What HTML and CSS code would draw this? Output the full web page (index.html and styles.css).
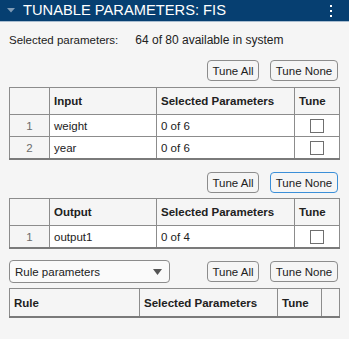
FILE: index.html
```html
<!DOCTYPE html>
<html>
<head>
<meta charset="utf-8">
<link rel="stylesheet" href="styles.css">
</head>
<body>
<div class="panel">
  <div class="header">
    <svg class="caret" width="8" height="5" viewBox="0 0 8 5"><polygon points="0,0 8,0 4,4.5" fill="#7f9bb5"/></svg>
    <span class="title">TUNABLE PARAMETERS: FIS</span>
    <svg class="kebab" width="4" height="14" viewBox="0 0 4 14"><rect x="1" y="1" width="2" height="2" fill="#fff"/><rect x="1" y="6" width="2" height="2" fill="#fff"/><rect x="1" y="11" width="2" height="2" fill="#fff"/></svg>
  </div>
  <div class="content">
    <div class="summary"><span class="lbl">Selected parameters:</span><span class="val">64 of 80 available in system</span></div>

    <div class="btnrow r1">
      <button class="btn w-all">Tune All</button>
      <button class="btn w-none">Tune None</button>
    </div>
    <table class="grid t1">
      <colgroup><col class="c-idx"><col class="c-name"><col class="c-sel"><col class="c-tune"></colgroup>
      <tr class="hd"><th></th><th>Input</th><th>Selected Parameters</th><th>Tune</th></tr>
      <tr><td class="idx">1</td><td>weight</td><td>0 of 6</td><td class="chk"><span class="box"></span></td></tr>
      <tr class="last"><td class="idx">2</td><td>year</td><td>0 of 6</td><td class="chk"><span class="box"></span></td></tr>
    </table>

    <div class="btnrow r2">
      <button class="btn w-all">Tune All</button>
      <button class="btn w-none focus">Tune None</button>
    </div>
    <table class="grid t2">
      <colgroup><col class="c-idx"><col class="c-name"><col class="c-sel"><col class="c-tune"></colgroup>
      <tr class="hd"><th></th><th>Output</th><th>Selected Parameters</th><th>Tune</th></tr>
      <tr class="last"><td class="idx">1</td><td>output1</td><td>0 of 4</td><td class="chk"><span class="box"></span></td></tr>
    </table>

    <div class="btnrow r3">
      <div class="select"><span>Rule parameters</span><svg width="9" height="6" viewBox="0 0 9 6"><polygon points="0,0 9,0 4.5,6" fill="#555"/></svg></div>
      <div class="spacer"></div>
      <button class="btn w-all">Tune All</button>
      <button class="btn w-none">Tune None</button>
    </div>
    <table class="grid t3">
      <colgroup><col class="c-rule"><col class="c-sel"><col class="c-tune"><col class="c-rest"></colgroup>
      <tr class="hd last"><th>Rule</th><th>Selected Parameters</th><th>Tune</th><th></th></tr>
    </table>
  </div>
</div>
</body>
</html>
```
FILE: styles.css
```css
html, body {
  margin: 0;
  padding: 0;
  background: #f5f5f5;
  font-family: "Liberation Sans", Arial, sans-serif;
  color: #212121;
}
.panel {
  width: 349px;
  height: 339px;
  overflow: hidden;
}
.header {
  height: 21px;
  background: #063f71;
  border-bottom: 1px solid #a9bdd0;
  display: flex;
  align-items: center;
  position: relative;
}
.caret {
  margin-left: 7px;
  margin-right: 8px;
}
.title {
  color: #fff;
  font-size: 14.7px;
  line-height: 21px;
}
.kebab {
  margin-left: auto;
  margin-right: 16px;
}
.content {
  padding: 0 10px 0 9px;
}
.summary {
  font-size: 11.5px;
  line-height: 16px;
  padding-top: 10px;
  height: 16px;
}
.summary .lbl {
  margin-right: 17px;
}
.summary .val {
  font-size: 12px;
}
.btnrow {
  display: flex;
  justify-content: flex-end;
  align-items: center;
  gap: 11px;
  padding-right: 1px;
}
.r1 { margin-top: 12px; }
.r2 { margin-top: 12px; }
.r3 { margin-top: 11px; }
.btn {
  height: 21px;
  padding: 0;
  border: 1px solid #8c8c8c;
  border-radius: 4px;
  background: #f5f5f5;
  font-family: "Liberation Sans", Arial, sans-serif;
  font-size: 11.5px;
  color: #212121;
}
.w-all { width: 52px; }
.w-none { width: 68px; }
.btn.focus { border-color: #3b8fd8; }
.select {
  width: 161px;
  height: 23px;
  box-sizing: border-box;
  border: 1px solid #8c8c8c;
  border-radius: 4px;
  background: #fafafa;
  display: flex;
  align-items: center;
  justify-content: space-between;
  padding: 0 7px 0 5px;
  font-size: 11.5px;
}
.spacer { flex: 1; }
.grid {
  border-collapse: collapse;
  table-layout: fixed;
  width: 330px;
  font-size: 11.5px;
}
.t1 { margin-top: 6px; }
.t2 { margin-top: 5px; }
.t3 { margin-top: 5px; }
.c-idx { width: 40px; }
.c-name { width: 107px; }
.c-sel { width: 138px; }
.c-tune { width: 45px; }
.c-rule { width: 130px; }
.t3 .c-tune { width: 44px; }
.c-rest { width: 18px; }
.grid th, .grid td {
  border: 1px solid #8c8c8c;
  padding: 0 0 0 4px;
  text-align: left;
  white-space: nowrap;
  overflow: hidden;
}
.grid th {
  height: 26px;
  font-weight: bold;
  background: #f5f5f5;
  font-size: 11.5px;
}
.t3 th { height: 27px; }
.grid td {
  height: 21px;
  background: #fff;
}
.grid td.idx {
  background: #f5f5f5;
  color: #6b6b6b;
  text-align: center;
  padding: 0;
}
.grid tr.last td, .grid tr.last th {
  border-bottom: 2px solid #7a7a7a;
}
.grid td.chk {
  text-align: center;
  padding: 0;
}
.box {
  display: inline-block;
  width: 12px;
  height: 12px;
  border: 1px solid #6f6f6f;
  background: #fff;
  vertical-align: middle;
}
```
